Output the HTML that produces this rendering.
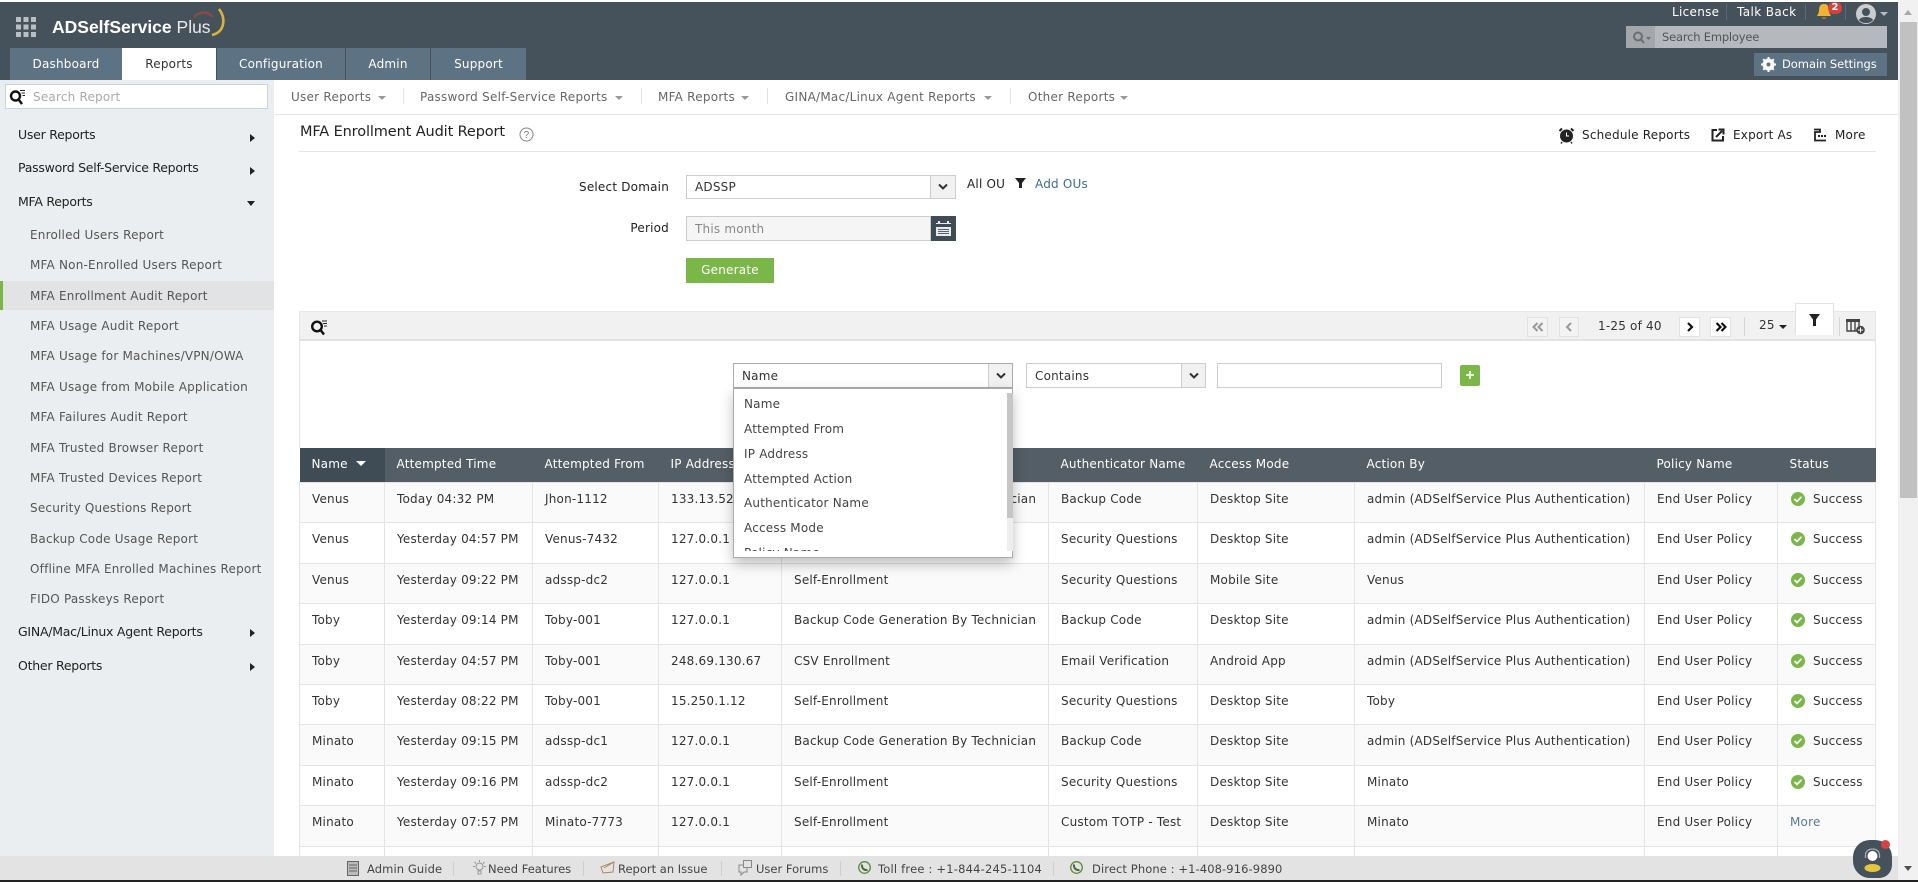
<!DOCTYPE html>
<html lang="en"><head><meta charset="utf-8"><title>MFA Enrollment Audit Report</title>
<style>
*{box-sizing:border-box}
html,body{margin:0;padding:0;width:1918px;height:882px;overflow:hidden;background:#fff}
body{position:relative;font-family:"DejaVu Sans","Liberation Sans",sans-serif;font-size:12px;color:#333;letter-spacing:.2px}
.a{position:absolute}
.t{position:absolute;white-space:nowrap;line-height:16px;height:16px}
.tab{position:absolute;top:48px;height:32px;background:#5d7283;color:#fff;text-align:center;line-height:32px;font-size:12px}
.side{font-size:12px;color:#555;left:30px}
.main{font-family:"DejaVu Sans",sans-serif;font-size:12.5px;color:#222;left:18px;letter-spacing:-.25px}
.sub{font-size:12px;color:#666;top:89px;letter-spacing:.25px}
.sep{position:absolute;width:1px;background:#e2e4e6}
.car{position:absolute;width:0;height:0;border-left:4px solid transparent;border-right:4px solid transparent;border-top:4px solid #999}
.box{position:absolute;background:#fff;border:1px solid #ccc}
.arr{position:absolute;top:0;bottom:0;right:0;background:#f1f1f1;border-left:1px solid #ccc}
.arr svg{position:absolute;left:50%;top:50%;margin:-4px 0 0 -6px}
table{position:absolute;left:299px;top:448px;width:1576px;border-collapse:collapse;table-layout:fixed;font-size:12px;color:#333}
th{background:#545e66;color:#fff;font-weight:normal;text-align:left;height:34px;padding:0 0 1px 12px;white-space:nowrap;overflow:hidden;font-size:12px}
td{padding:8px 0 0 12px;vertical-align:top;border:1px solid #e4e4e4;white-space:nowrap;overflow:hidden;line-height:16px}
td:last-child{padding-left:13px}
tr.o td{background:#fafafa}
.ok{display:inline-block;width:14px;height:14px;vertical-align:-3px;margin:0 8px 0 0}
.pg{position:absolute;top:317px;height:20px;background:#fff;border:1px solid #e2e2e2}
.pg svg{position:absolute;left:50%;top:50%;margin:-5px 0 0 -6px}
.di{position:absolute;font-size:12px;color:#444;white-space:nowrap;line-height:16px}
.ft{font-size:11.5px;color:#444;top:861px;letter-spacing:.1px}
.fs{position:absolute;top:861px;height:15px;width:1px;background:#cfcfcf}
</style></head><body>

<!-- header -->
<div class="a" style="left:0;top:2px;width:1898px;height:78px;background:#45525b"></div>
<svg class="a" style="left:15px;top:16px" width="22" height="22"><g fill="#b9bec2"><rect x="1" y="1" width="5" height="5"/><rect x="8.500" y="1" width="5" height="5"/><rect x="16" y="1" width="5" height="5"/><rect x="1" y="8.500" width="5" height="5"/><rect x="8.500" y="8.500" width="5" height="5"/><rect x="16" y="8.500" width="5" height="5"/><rect x="1" y="16" width="5" height="5"/><rect x="8.500" y="16" width="5" height="5"/><rect x="16" y="16" width="5" height="5"/></g></svg>
<div class="t" style="left:52px;top:15px;height:24px;line-height:24px;font-family:'Liberation Sans',sans-serif;font-size:17.500px;color:#fff;font-weight:bold;letter-spacing:0">ADSelfService <span style="font-weight:normal;color:#e8eaeb">Plus</span></div>
<svg class="a" style="left:192px;top:6px" width="36" height="40" fill="none"><path d="M27 3 C34 12 33 26 20 29" stroke="#d9b23a" stroke-width="2.600"/><path d="M2 11 C8 5 16 5 21 11" stroke="#8a4a40" stroke-width="2.500"/></svg>

<div class="tab" style="left:10px;width:112px">Dashboard</div>
<div class="tab" style="left:122px;width:94px;background:#fff;color:#333">Reports</div>
<div class="tab" style="left:217px;width:128px">Configuration</div>
<div class="tab" style="left:346px;width:84px">Admin</div>
<div class="tab" style="left:431px;width:95px">Support</div>

<div class="t" style="left:1672px;top:4px;color:#fff;font-size:12px;letter-spacing:.3px">License</div>
<div class="sep" style="left:1726px;top:4px;height:16px;background:#5c6972"></div>
<div class="t" style="left:1737px;top:4px;color:#fff;font-size:12px;letter-spacing:.4px">Talk Back</div>
<div class="sep" style="left:1805px;top:4px;height:16px;background:#5c6972"></div>
<svg class="a" style="left:1816px;top:3px" width="18" height="17"><path d="M8 1 C4 1 3 4 3 7 C3 10 2 11 1 13 L15 13 C14 11 13 10 13 7 C13 4 12 1 8 1Z" fill="#f2b233"/><rect x="6" y="14" width="4" height="2" fill="#a5722a"/></svg>
<div class="a" style="left:1828px;top:2px;width:14px;height:12px;border-radius:6px;background:#d8413d;color:#fff;font-size:10px;font-weight:bold;text-align:center;line-height:12px;letter-spacing:0">2</div>
<div class="sep" style="left:1845px;top:4px;height:16px;background:#5c6972"></div>
<svg class="a" style="left:1856px;top:4px" width="20" height="20"><circle cx="10" cy="10" r="10" fill="#c9cdd0"/><circle cx="10" cy="8" r="4" fill="#45525b"/><path d="M3 16 C5 12 15 12 17 16 C14 20 6 20 3 16Z" fill="#45525b"/></svg>
<div class="car" style="left:1880px;top:12px;border-top-color:#b8bcc0"></div>

<div class="a" style="left:1626px;top:26px;width:261px;height:22px;background:#b5b8bd"></div>
<div class="a" style="left:1626px;top:26px;width:29px;height:22px;background:#a4a7aa"></div>
<svg class="a" style="left:1632px;top:31px" width="20" height="13" fill="none"><circle cx="6" cy="5.500" r="4" stroke="#6b6f73" stroke-width="2"/><path d="M9 8.500 L12 12" stroke="#6b6f73" stroke-width="2"/><path d="M14 6 L19 6 L16.500 9Z" fill="#6b6f73"/></svg>
<div class="t" style="left:1662px;top:29px;color:#555;font-size:11.500px;letter-spacing:-.2px">Search Employee</div>

<div class="a" style="left:1754px;top:53px;width:133px;height:23px;background:#5d7283"></div>
<svg class="a" style="left:1761px;top:57px" width="15" height="15"><circle cx="7.500" cy="7.500" r="4.500" fill="none" stroke="#fff" stroke-width="3"/><path d="M7.500 0V15M0 7.500H15M2.200 2.200L12.800 12.800M12.800 2.200L2.200 12.800" stroke="#fff" stroke-width="2"/><circle cx="7.500" cy="7.500" r="2" fill="#5d7283"/></svg>
<div class="t" style="left:1782px;top:56px;color:#fff;font-size:11.500px;letter-spacing:-.05px">Domain Settings</div>

<!-- scrollbar -->
<div class="a" style="left:1898px;top:0;width:20px;height:880px;background:#f1f1f1"></div>
<div class="a" style="left:1900px;top:22px;width:17px;height:476px;background:#c1c1c1"></div>
<div class="a" style="left:1904px;top:10px;border-left:4px solid transparent;border-right:4px solid transparent;border-bottom:5px solid #a8a8a8"></div>
<div class="a" style="left:1904px;top:866px;border-left:4px solid transparent;border-right:4px solid transparent;border-top:5px solid #505050"></div>

<!-- sidebar -->
<div class="a" style="left:0;top:80px;width:274px;height:777px;background:#ebeef0"></div>
<div class="a" style="left:5px;top:84px;width:263px;height:25px;background:#fff;border:1px solid #cfd2d4"></div>
<svg class="a" style="left:9px;top:89px" width="17" height="16" fill="none"><circle cx="6.500" cy="7" r="4.500" stroke="#111" stroke-width="2.400"/><path d="M9.500 10.500 L13 15" stroke="#111" stroke-width="2.400"/><path d="M11 1.500H16M12.500 4H16M13.500 6.500H16" stroke="#222" stroke-width="1"/></svg>
<div class="t" style="left:33px;top:89px;font-size:12px;color:#aaa">Search Report</div>

<div class="t main" style="top:127px">User Reports</div>
<div class="t main" style="top:160px">Password Self-Service Reports</div>
<div class="t main" style="top:194px">MFA Reports</div>
<div class="a" style="left:250px;top:134px;border-top:4px solid transparent;border-bottom:4px solid transparent;border-left:5px solid #222"></div>
<div class="a" style="left:250px;top:167px;border-top:4px solid transparent;border-bottom:4px solid transparent;border-left:5px solid #222"></div>
<div class="a" style="left:247px;top:201px;border-left:4px solid transparent;border-right:4px solid transparent;border-top:5px solid #222"></div>

<div class="a" style="left:0;top:281px;width:274px;height:29px;background:#e1e3e5"></div>
<div class="a" style="left:0;top:281px;width:3px;height:29px;background:#7ab648"></div>
<div class="t side" style="top:227px">Enrolled Users Report</div>
<div class="t side" style="top:257px">MFA Non-Enrolled Users Report</div>
<div class="t side" style="top:288px">MFA Enrollment Audit Report</div>
<div class="t side" style="top:318px">MFA Usage Audit Report</div>
<div class="t side" style="top:348px">MFA Usage for Machines/VPN/OWA</div>
<div class="t side" style="top:379px">MFA Usage from Mobile Application</div>
<div class="t side" style="top:409px">MFA Failures Audit Report</div>
<div class="t side" style="top:440px">MFA Trusted Browser Report</div>
<div class="t side" style="top:470px">MFA Trusted Devices Report</div>
<div class="t side" style="top:500px">Security Questions Report</div>
<div class="t side" style="top:531px">Backup Code Usage Report</div>
<div class="t side" style="top:561px">Offline MFA Enrolled Machines Report</div>
<div class="t side" style="top:591px">FIDO Passkeys Report</div>
<div class="t main" style="top:624px">GINA/Mac/Linux Agent Reports</div>
<div class="t main" style="top:658px">Other Reports</div>
<div class="a" style="left:250px;top:629px;border-top:4px solid transparent;border-bottom:4px solid transparent;border-left:5px solid #222"></div>
<div class="a" style="left:250px;top:663px;border-top:4px solid transparent;border-bottom:4px solid transparent;border-left:5px solid #222"></div>

<!-- subnav -->
<div class="a" style="left:274px;top:114px;width:1624px;height:1px;background:#e4e6e8"></div>
<div class="t sub" style="left:291px">User Reports</div><div class="car" style="left:378px;top:96px"></div>
<div class="sep" style="left:403px;top:88px;height:16px"></div>
<div class="t sub" style="left:420px">Password Self-Service Reports</div><div class="car" style="left:615px;top:96px"></div>
<div class="sep" style="left:641px;top:88px;height:16px"></div>
<div class="t sub" style="left:658px">MFA Reports</div><div class="car" style="left:741px;top:96px"></div>
<div class="sep" style="left:767px;top:88px;height:16px"></div>
<div class="t sub" style="left:785px">GINA/Mac/Linux Agent Reports</div><div class="car" style="left:984px;top:96px"></div>
<div class="sep" style="left:1010px;top:88px;height:16px"></div>
<div class="t sub" style="left:1028px">Other Reports</div><div class="car" style="left:1120px;top:96px"></div>

<!-- title -->
<div class="t" style="left:300px;top:124px;font-size:14.500px;color:#222;letter-spacing:-.12px">MFA Enrollment Audit Report</div>
<svg class="a" style="left:519px;top:127px" width="15" height="15" fill="none"><circle cx="7.500" cy="7.500" r="6.500" stroke="#888"/><text x="7.500" y="11" font-size="10" fill="#777" text-anchor="middle" font-family="Liberation Sans">?</text></svg>
<div class="a" style="left:299px;top:151px;width:1577px;height:1px;background:#e4e4e4"></div>

<svg class="a" style="left:1558px;top:127px" width="17" height="17"><circle cx="8.500" cy="9" r="6.500" fill="#222"/><path d="M1.500 4 L4 1.500 M15.500 4 L13 1.500" stroke="#222" stroke-width="2"/><path d="M8.500 5.500V9H11" stroke="#fff" fill="none"/><path d="M4 15L3 16.500M13 15L14 16.500" stroke="#222" stroke-width="1.500"/></svg>
<div class="t" style="left:1582px;top:127px;color:#222">Schedule Reports</div>
<svg class="a" style="left:1711px;top:128px" width="14" height="14" fill="none"><path d="M6 2H1.500V12.500H12V8" stroke="#222" stroke-width="2"/><path d="M5 9L11 3M7.500 1.500H12.500V6.500" stroke="#222" stroke-width="2"/></svg>
<div class="t" style="left:1733px;top:127px;color:#222">Export As</div>
<svg class="a" style="left:1813px;top:128px" width="14" height="14" fill="none"><path d="M1 1.500H7V4H2V12.500H13" stroke="#222" stroke-width="1.800"/><rect x="5" y="7" width="2" height="2" fill="#222"/><rect x="8" y="7" width="2" height="2" fill="#222"/><rect x="11" y="7" width="2" height="2" fill="#222"/></svg>
<div class="t" style="left:1835px;top:127px;color:#222">More</div>

<!-- form -->
<div class="t" style="right:1249px;top:179px;color:#222">Select Domain</div>
<div class="box" style="left:686px;top:175px;width:270px;height:24px;padding-left:8px;line-height:23px;color:#333">ADSSP<div class="arr" style="width:25px"><svg width="12" height="8" fill="none"><path d="M2 1.500 L6 5.500 L10 1.500" stroke="#333" stroke-width="2"/></svg></div></div>
<div class="t" style="left:967px;top:176px;color:#222">All OU</div>
<svg class="a" style="left:1015px;top:178px" width="11" height="10"><path d="M0 0H11L7 5V10H4V5Z" fill="#222"/></svg>
<div class="t" style="left:1035px;top:176px;color:#3a6d94">Add OUs</div>

<div class="t" style="right:1249px;top:220px;color:#222">Period</div>
<div class="a" style="left:686px;top:216px;width:245px;height:25px;background:#f5f5f5;border:1px solid #ccc;padding-left:8px;line-height:25px;color:#888">This month</div>
<div class="a" style="left:931px;top:216px;width:25px;height:25px;background:#3f4c55"></div>
<svg class="a" style="left:935px;top:220px" width="17" height="17"><rect x="1" y="3" width="15" height="13" fill="#e8eaeb"/><rect x="3" y="1" width="2" height="5" fill="#e8eaeb"/><rect x="12" y="1" width="2" height="5" fill="#e8eaeb"/><rect x="1" y="4" width="15" height="3" fill="#3f4c55"/><g fill="#55626b"><rect x="3" y="9" width="11" height="1"/><rect x="3" y="11" width="11" height="1"/><rect x="3" y="13" width="11" height="1"/></g></svg>
<div class="a" style="left:686px;top:258px;width:88px;height:25px;background:#7ab648;color:#fff;text-align:center;line-height:25px;font-size:12px">Generate</div>

<!-- toolbar -->
<div class="a" style="left:299px;top:311px;width:1577px;height:30px;background:#f1f1f1;border:1px solid #e6e6e6;border-bottom:2px solid #e2e2e2"></div>
<svg class="a" style="left:310px;top:319px" width="18" height="17" fill="none"><circle cx="7" cy="7.500" r="4.800" stroke="#111" stroke-width="2.400"/><path d="M10.500 11 L14 15.500" stroke="#111" stroke-width="2.400"/><path d="M12 2H17M13 4.500H17M14 7H17" stroke="#222" stroke-width="1"/></svg>
<div class="pg" style="left:1527px;width:21px;background:#f3f3f3"><svg width="12" height="10" fill="none" stroke="#999" stroke-width="2"><path d="M5.500 1 L1.500 5 L5.500 9M10.500 1 L6.500 5 L10.500 9"/></svg></div>
<div class="pg" style="left:1559px;width:20px;background:#f3f3f3"><svg width="12" height="10" fill="none" stroke="#999" stroke-width="2"><path d="M8 1 L4 5 L8 9"/></svg></div>
<div class="t" style="left:1598px;top:318px;color:#333">1-25 of 40</div>
<div class="pg" style="left:1679px;width:21px"><svg width="12" height="10" fill="none" stroke="#111" stroke-width="2.200"><path d="M4 1 L8 5 L4 9"/></svg></div>
<div class="pg" style="left:1710px;width:21px"><svg width="12" height="10" fill="none" stroke="#111" stroke-width="2.200"><path d="M1.500 1 L5.500 5 L1.500 9M6.500 1 L10.500 5 L6.500 9"/></svg></div>
<div class="sep" style="left:1744px;top:317px;height:19px;background:#d6d6d6"></div>
<div class="t" style="left:1759px;top:317px;color:#333">25</div>
<div class="car" style="left:1779px;top:325px;border-top-color:#222"></div>
<div class="a" style="left:1795px;top:303px;width:39px;height:32px;background:#fff;border:1px solid #e2e2e2;border-bottom:0"></div>
<svg class="a" style="left:1809px;top:314px" width="11" height="12"><path d="M0 0H11L7 5.500V12H4V5.500Z" fill="#222"/></svg>
<div class="sep" style="left:1839px;top:317px;height:19px;background:#d6d6d6"></div>
<svg class="a" style="left:1846px;top:318px" width="20" height="17" fill="none"><rect x="0" y="1" width="14" height="3" fill="#444"/><path d="M1 4V13H13V4M5 4V13M9 4V13" stroke="#444" stroke-width="1.400"/><circle cx="14.500" cy="12" r="4.300" fill="#444"/><path d="M14.500 9.500V14.500M12 12H17" stroke="#fff"/></svg>

<!-- table -->
<table>
<colgroup><col style="width:85px"><col style="width:148px"><col style="width:126px"><col style="width:123px"><col style="width:267px"><col style="width:149px"><col style="width:157px"><col style="width:290px"><col style="width:133px"><col style="width:98px"></colgroup>
<tr><th style="background:#3f4c55">Name &nbsp;<span style="display:inline-block;width:0;height:0;border-left:5px solid transparent;border-right:5px solid transparent;border-top:5px solid #fff;vertical-align:2px"></span></th><th>Attempted Time</th><th>Attempted From</th><th>IP Address</th><th>Attempted Action</th><th>Authenticator Name</th><th>Access Mode</th><th>Action By</th><th>Policy Name</th><th>Status</th></tr>
<tr class="o" style="height:40px"><td>Venus</td><td>Today 04:32 PM</td><td>Jhon-1112</td><td>133.13.52.87</td><td>Backup Code Generation By Technician</td><td>Backup Code</td><td>Desktop Site</td><td>admin (ADSelfService Plus Authentication)</td><td>End User Policy</td><td><svg class="ok" viewBox="0 0 14 14"><circle cx="7" cy="7" r="7" fill="#7ab648"/><path d="M3.500 7 L6 9.500 L10.500 4.800" fill="none" stroke="#fff" stroke-width="1.800"/></svg>Success</td></tr>
<tr style="height:41px"><td>Venus</td><td>Yesterday 04:57 PM</td><td>Venus-7432</td><td>127.0.0.1</td><td>Self-Enrollment</td><td>Security Questions</td><td>Desktop Site</td><td>admin (ADSelfService Plus Authentication)</td><td>End User Policy</td><td><svg class="ok" viewBox="0 0 14 14"><circle cx="7" cy="7" r="7" fill="#7ab648"/><path d="M3.500 7 L6 9.500 L10.500 4.800" fill="none" stroke="#fff" stroke-width="1.800"/></svg>Success</td></tr>
<tr class="o" style="height:40px"><td>Venus</td><td>Yesterday 09:22 PM</td><td>adssp-dc2</td><td>127.0.0.1</td><td>Self-Enrollment</td><td>Security Questions</td><td>Mobile Site</td><td>Venus</td><td>End User Policy</td><td><svg class="ok" viewBox="0 0 14 14"><circle cx="7" cy="7" r="7" fill="#7ab648"/><path d="M3.500 7 L6 9.500 L10.500 4.800" fill="none" stroke="#fff" stroke-width="1.800"/></svg>Success</td></tr>
<tr style="height:41px"><td>Toby</td><td>Yesterday 09:14 PM</td><td>Toby-001</td><td>127.0.0.1</td><td>Backup Code Generation By Technician</td><td>Backup Code</td><td>Desktop Site</td><td>admin (ADSelfService Plus Authentication)</td><td>End User Policy</td><td><svg class="ok" viewBox="0 0 14 14"><circle cx="7" cy="7" r="7" fill="#7ab648"/><path d="M3.500 7 L6 9.500 L10.500 4.800" fill="none" stroke="#fff" stroke-width="1.800"/></svg>Success</td></tr>
<tr class="o" style="height:40px"><td>Toby</td><td>Yesterday 04:57 PM</td><td>Toby-001</td><td>248.69.130.67</td><td>CSV Enrollment</td><td>Email Verification</td><td>Android App</td><td>admin (ADSelfService Plus Authentication)</td><td>End User Policy</td><td><svg class="ok" viewBox="0 0 14 14"><circle cx="7" cy="7" r="7" fill="#7ab648"/><path d="M3.500 7 L6 9.500 L10.500 4.800" fill="none" stroke="#fff" stroke-width="1.800"/></svg>Success</td></tr>
<tr style="height:40px"><td>Toby</td><td>Yesterday 08:22 PM</td><td>Toby-001</td><td>15.250.1.12</td><td>Self-Enrollment</td><td>Security Questions</td><td>Desktop Site</td><td>Toby</td><td>End User Policy</td><td><svg class="ok" viewBox="0 0 14 14"><circle cx="7" cy="7" r="7" fill="#7ab648"/><path d="M3.500 7 L6 9.500 L10.500 4.800" fill="none" stroke="#fff" stroke-width="1.800"/></svg>Success</td></tr>
<tr class="o" style="height:41px"><td>Minato</td><td>Yesterday 09:15 PM</td><td>adssp-dc1</td><td>127.0.0.1</td><td>Backup Code Generation By Technician</td><td>Backup Code</td><td>Desktop Site</td><td>admin (ADSelfService Plus Authentication)</td><td>End User Policy</td><td><svg class="ok" viewBox="0 0 14 14"><circle cx="7" cy="7" r="7" fill="#7ab648"/><path d="M3.500 7 L6 9.500 L10.500 4.800" fill="none" stroke="#fff" stroke-width="1.800"/></svg>Success</td></tr>
<tr style="height:40px"><td>Minato</td><td>Yesterday 09:16 PM</td><td>adssp-dc2</td><td>127.0.0.1</td><td>Self-Enrollment</td><td>Security Questions</td><td>Desktop Site</td><td>Minato</td><td>End User Policy</td><td><svg class="ok" viewBox="0 0 14 14"><circle cx="7" cy="7" r="7" fill="#7ab648"/><path d="M3.500 7 L6 9.500 L10.500 4.800" fill="none" stroke="#fff" stroke-width="1.800"/></svg>Success</td></tr>
<tr class="o" style="height:41px"><td>Minato</td><td>Yesterday 07:57 PM</td><td>Minato-7773</td><td>127.0.0.1</td><td>Self-Enrollment</td><td>Custom TOTP - Test</td><td>Desktop Site</td><td>Minato</td><td>End User Policy</td><td style="color:#5d7a94;padding-left:12px">More</td></tr>
<tr style="height:40px"><td></td><td></td><td></td><td></td><td></td><td></td><td></td><td></td><td></td><td></td></tr>
</table>
<div class="a" style="left:299px;top:341px;width:1px;height:107px;background:#e4e4e4"></div>
<div class="a" style="left:1875px;top:341px;width:1px;height:107px;background:#e4e4e4"></div>

<!-- filter -->
<div class="box" style="left:733px;top:363px;width:280px;height:25px;border-color:#aaa;padding-left:8px;line-height:24px;color:#333">Name<div class="arr" style="width:24px"><svg width="12" height="8" fill="none"><path d="M2 1.500 L6 5.500 L10 1.500" stroke="#333" stroke-width="2"/></svg></div></div>
<div class="box" style="left:1026px;top:363px;width:180px;height:25px;padding-left:8px;line-height:24px;color:#333">Contains<div class="arr" style="width:24px"><svg width="12" height="8" fill="none"><path d="M2 1.500 L6 5.500 L10 1.500" stroke="#333" stroke-width="2"/></svg></div></div>
<div class="box" style="left:1217px;top:363px;width:225px;height:25px"></div>
<div class="a" style="left:1460px;top:365px;width:20px;height:21px;border-radius:2px;background:#7ab648"></div>
<svg class="a" style="left:1466px;top:371px" width="8" height="8"><path d="M4 0V8M0 4H8" stroke="#eaf3df" stroke-width="2"/></svg>

<!-- dropdown -->
<div class="a" style="left:733px;top:388px;width:280px;height:170px;background:#fff;border:1px solid #aaa;box-shadow:0 6px 12px rgba(0,0,0,.25)"></div>
<div class="a" style="left:734px;top:389px;width:278px;height:162px;overflow:hidden">
<div class="di" style="left:10px;top:7px">Name</div>
<div class="di" style="left:10px;top:32px">Attempted From</div>
<div class="di" style="left:10px;top:57px">IP Address</div>
<div class="di" style="left:10px;top:82px">Attempted Action</div>
<div class="di" style="left:10px;top:106px">Authenticator Name</div>
<div class="di" style="left:10px;top:131px">Access Mode</div>
<div class="di" style="left:10px;top:156px">Policy Name</div>
</div>
<div class="a" style="left:1007px;top:393px;width:6px;height:158px;background:#eeeeee"></div>
<div class="a" style="left:1007px;top:393px;width:6px;height:125px;background:#c6c6c6"></div>

<!-- footer -->
<div class="a" style="left:0;top:856px;width:1898px;height:24px;background:#e3e3e3"></div>
<div class="a" style="left:0;top:880px;width:1918px;height:2px;background:#222"></div>
<svg class="a" style="left:347px;top:861px" width="12" height="15" fill="none"><rect x=".5" y=".5" width="11" height="14" fill="#bbb" stroke="#666"/><path d="M2 4H10M2 7H10M2 10H10" stroke="#666"/></svg>
<div class="t ft" style="left:367px">Admin Guide</div><div class="fs" style="left:453px"></div>
<svg class="a" style="left:472px;top:860px" width="15" height="16" fill="none" stroke="#999"><circle cx="7.500" cy="6.500" r="3.500"/><path d="M6 11H9V14H6ZM7.500 0V2M1 6.500H3M12 6.500H14M2.500 2L4 3.500M12.500 2L11 3.500"/></svg>
<div class="t ft" style="left:488px;letter-spacing:0">Need Features</div><div class="fs" style="left:583px"></div>
<svg class="a" style="left:600px;top:861px" width="16" height="14" fill="none" stroke="#b0865a"><path d="M1 6L14 1L13 11L3 12Z"/><path d="M4 7L14 1"/></svg>
<div class="t ft" style="left:618px;letter-spacing:0">Report an Issue</div><div class="fs" style="left:721px"></div>
<svg class="a" style="left:738px;top:860px" width="15" height="16" fill="none" stroke="#888"><rect x="5.500" y=".5" width="8" height="7"/><path d="M5 5H1V12H3V15L6 12H9V8"/></svg>
<div class="t ft" style="left:756px;letter-spacing:0">User Forums</div><div class="fs" style="left:840px"></div>
<svg class="a" style="left:858px;top:861px" width="13" height="13" fill="none"><circle cx="6.500" cy="6.500" r="5.800" stroke="#5c8a3a" stroke-width="1.300"/><path d="M4 3.500C3.500 7 6 9.500 9.500 9" stroke="#4a6a3a" stroke-width="2"/></svg>
<div class="t ft" style="left:878px;letter-spacing:.2px">Toll free : +1-844-245-1104</div><div class="fs" style="left:1053px"></div>
<svg class="a" style="left:1070px;top:861px" width="13" height="13" fill="none"><circle cx="6.500" cy="6.500" r="5.800" stroke="#5c8a3a" stroke-width="1.300"/><path d="M4 3.500C3.500 7 6 9.500 9.500 9" stroke="#4a6a3a" stroke-width="2"/></svg>
<div class="t ft" style="left:1092px">Direct Phone : +1-408-916-9890</div>

<!-- chat -->
<div class="a" style="left:1853px;top:840px;width:39px;height:38px;background:#45525b;border-radius:17px 17px 13px 17px"></div>
<svg class="a" style="left:1862px;top:847px" width="22" height="26" fill="none"><circle cx="10.500" cy="9" r="5" fill="#fff"/><path d="M3.500 11V8C3.500 0 17.500 0 17.500 8V11" stroke="#a8adb1" stroke-width="1.300"/><ellipse cx="10.500" cy="21" rx="8" ry="4" fill="#e6c63c"/></svg>
<div class="a" style="left:1881px;top:840px;width:9px;height:9px;border-radius:50%;background:#d8413d"></div>
</body></html>
